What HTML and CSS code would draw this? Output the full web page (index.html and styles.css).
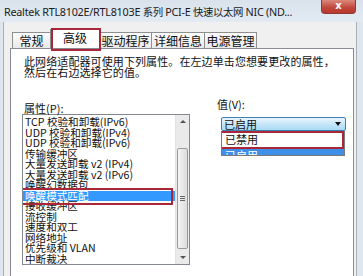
FILE: index.html
```html
<!DOCTYPE html>
<html lang="zh-CN">
<head>
<meta charset="utf-8">
<link rel="stylesheet" href="styles.css">
</head>
<body>
<div class="titlebar">
  <span class="title-text">Realtek RTL8102E/RTL8103E <span class="cjk">系列</span> PCI-E <span class="cjk">快速以太网</span> NIC (ND...</span>
  <span class="close">x</span>
</div>
<div class="frame">
  <div class="tabs">
    <div class="tab t1">常规</div>
    <div class="tab t2 active">高级</div>
    <div class="tab t3">驱动程序</div>
    <div class="tab t4">详细信息</div>
    <div class="tab t5">电源管理</div>
  </div>
  <div class="panel">
    <p class="desc">此网络适配器可使用下列属性。在左边单击您想要更改的属性，<br>然后在右边选择它的值。</p>
    <div class="cols">
      <div class="left">
        <div class="label">属性(<u>P</u>):</div>
        <div class="listbox">
          <ul class="items">
            <li>TCP 校验和卸载(IPv6)</li>
            <li>UDP 校验和卸载(IPv4)</li>
            <li>UDP 校验和卸载(IPv6)</li>
            <li>传输缓冲区</li>
            <li>大量发送卸载 v2 (IPv4)</li>
            <li>大量发送卸载 v2 (IPv6)</li>
            <li>唤醒幻数据包</li>
            <li class="sel">唤醒模式匹配</li>
            <li>接收缓冲区</li>
            <li>流控制</li>
            <li>速度和双工</li>
            <li>网络地址</li>
            <li>优先级和 VLAN</li>
            <li>中断裁决</li>
          </ul>
          <div class="scrollbar">
            <div class="sb-btn"><span class="arr up"></span></div>
            <div class="sb-track">
              <div class="sb-thumb"><span class="grip"></span></div>
            </div>
            <div class="sb-btn"><span class="arr down"></span></div>
          </div>
        </div>
      </div>
      <div class="right">
        <div class="label">值(<u>V</u>):</div>
        <div class="combo"><span>已启用</span><span class="caret"></span></div>
        <div class="droplist">
          <div class="opt mark">已禁用</div>
          <div class="opt hl">已启用</div>
        </div>
      </div>
    </div>
  </div>
</div>
</body>
</html>
```
FILE: styles.css
```css
html, body {
  margin: 0;
  padding: 0;
}
body {
  width: 363px;
  height: 276px;
  overflow: hidden;
  background: #dfe6ee;
  font-family: "Noto Sans CJK SC", "Noto Sans", sans-serif;
  color: #111;
}
.titlebar {
  height: 22px;
  display: flex;
  align-items: flex-start;
  background: linear-gradient(#d9e2ec, #e3eaf2);
}
.title-text {
  font-family: "Noto Sans", "Noto Sans CJK SC", sans-serif;
  font-size: 10.8px;
  line-height: 14px;
  padding: 5px 0 0 4px;
  white-space: nowrap;
  letter-spacing: -0.25px;
  color: #1b1b1b;
  overflow: hidden;
}
.title-text .cjk {
  font-size: 10.4px;
  letter-spacing: -0.4px;
}
.close {
  margin-left: auto;
  margin-right: 7px;
  flex: none;
  width: 33px;
  height: 13px;
  background: linear-gradient(#d9897c, #c0453a 60%, #b8382e);
  border: 1px solid #8d3a33;
  border-top: none;
  border-radius: 0 0 4px 4px;
  color: #fff;
  font-family: "DejaVu Sans", sans-serif;
  font-weight: bold;
  font-size: 10px;
  line-height: 11px;
  text-align: center;
}
.frame {
  margin-left: 3px;
  width: 352px;
  height: 246px;
  border-left: 1px solid #a7afb8;
  border-right: 1px solid #a7afb8;
  background: #f0f0f0;
  padding-top: 8px;
  overflow: hidden;
}
.tabs {
  display: flex;
  align-items: flex-end;
  height: 18px;
  padding-left: 8px;
}
.tab {
  height: 15px;
  border: 1px solid #8e8f8f;
  border-bottom: none;
  background: linear-gradient(#fbfbfb, #e9e9e9);
  font-size: 12px;
  line-height: 15px;
  text-align: center;
  margin-right: -1px;
  position: relative;
}
.t1 { width: 37px; }
.t2 { width: 48px; }
.t3 { width: 51px; }
.t4 { width: 52px; }
.t5 { width: 51px; }
.tab.active {
  height: 18px;
  background: #fff;
  z-index: 2;
  line-height: 16px;
}
.tab.active::after {
  content: "";
  position: absolute;
  left: 0;
  top: -2px;
  right: -2px;
  bottom: -3px;
  border: 2px solid #a8283a;
}
.panel {
  margin-left: 6px;
  width: 342px;
  height: 227px;
  border: 1px solid #898c95;
  border-bottom: none;
  background: #fff;
  position: relative;
}
.desc {
  margin: 0;
  padding: 7px 0 0 13px;
  font-size: 11px;
  line-height: 11px;
  white-space: nowrap;
  letter-spacing: 0.1px;
}
.cols {
  display: flex;
  align-items: flex-start;
  margin-top: 21px;
}
.label {
  font-size: 11px;
  line-height: 11px;
  white-space: nowrap;
}
.label u { text-decoration: none; }
.left {
  padding: 4px 0 0 11px;
}
.left .label { padding-left: 2px; }
.listbox {
  width: 166px;
  height: 149px;
  border: 1px solid #828790;
  display: flex;
}
.items {
  list-style: none;
  margin: 0;
  padding: 2px 0 0 0;
  flex: 1;
  font-size: 10.6px;
  line-height: 10.5px;
  white-space: nowrap;
  overflow: hidden;
}
.items li {
  padding-left: 2px;
}
.items li.sel {
  background: #3399ff;
  color: #fff;
  position: relative;
}
.items li.sel::after {
  content: "";
  position: absolute;
  left: -9px;
  top: -3px;
  width: 155px;
  height: 13px;
  border: 2px solid #a8283a;
}
.scrollbar {
  width: 13px;
  display: flex;
  flex-direction: column;
  background: #eaeaea;
  border-left: 1px solid #e2e2e2;
}
.sb-btn {
  height: 13px;
  display: flex;
  align-items: center;
  justify-content: center;
}
.arr {
  width: 0;
  height: 0;
  border-left: 3px solid transparent;
  border-right: 3px solid transparent;
}
.arr.up { border-bottom: 3px solid #555; }
.arr.down { border-top: 3px solid #555; }
.sb-track {
  flex: 1;
  padding: 20px 0 2px 0;
  display: flex;
}
.sb-thumb {
  flex: 1;
  margin: 0 1px;
  border: 1px solid #9a9a9a;
  border-radius: 2px;
  background: linear-gradient(90deg, #f4f4f4, #dcdcdc);
  display: flex;
  align-items: center;
  justify-content: center;
}
.grip {
  width: 5px;
  height: 5px;
  background: repeating-linear-gradient(#666 0 1px, transparent 1px 2px);
}
.right {
  padding-left: 27px;
}
.combo {
  margin: 7px 0 0 4px;
  width: 121px;
  height: 12px;
  border: 1px solid #3c7fb1;
  border-radius: 2px;
  background: linear-gradient(#eaf6fd, #c6e6f8 50%, #a9daf5);
  font-size: 11px;
  line-height: 12px;
  display: flex;
  align-items: center;
  padding-left: 2px;
  box-sizing: content-box;
}
.caret {
  margin-left: auto;
  margin-right: 4px;
  width: 0;
  height: 0;
  border-left: 3px solid transparent;
  border-right: 3px solid transparent;
  border-top: 4px solid #111;
}
.droplist {
  margin-left: 4px;
  width: 122px;
  height: 24px;
  border: 1px solid #7a7a7a;
  border-top: none;
  overflow: hidden;
  background: #fff;
}
.opt {
  font-size: 11px;
  line-height: 16px;
  padding-left: 3px;
}
.opt.hl {
  background: #3f8ee8;
  color: #fff;
}
.opt.mark {
  position: relative;
}
.opt.mark::after {
  content: "";
  position: absolute;
  left: -15px;
  top: 0;
  width: 133px;
  height: 14px;
  border: 2px solid #a8283a;
}
```
